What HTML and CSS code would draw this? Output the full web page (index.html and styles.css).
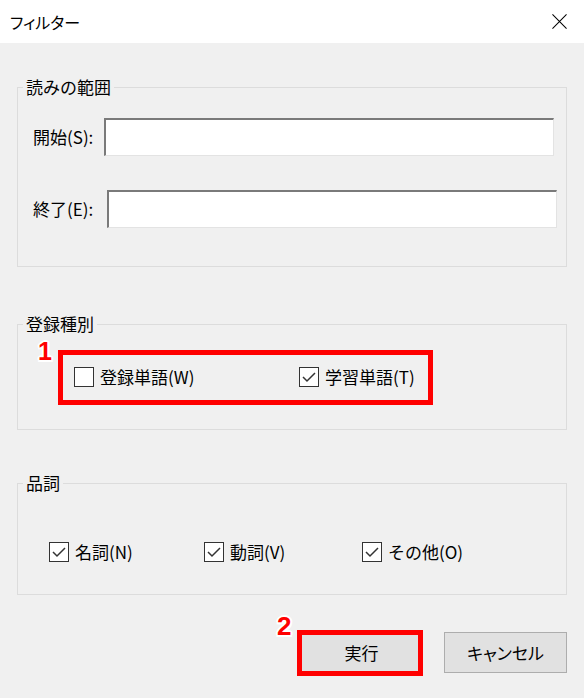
FILE: index.html
```html
<!DOCTYPE html>
<html lang="ja">
<head>
<meta charset="utf-8">
<title>フィルター</title>
<link rel="stylesheet" href="styles.css">
</head>
<body>
<div class="window">
  <header class="titlebar">
    <span class="title">フィルター</span>
    <svg class="close" width="16" height="16" viewBox="0 0 16 16" aria-hidden="true">
      <path d="M0.5 0.5 L15.5 15.5 M15.5 0.5 L0.5 15.5" stroke="#000" stroke-width="1.1" fill="none"/>
    </svg>
  </header>
  <main class="content">
    <fieldset class="group group-range">
      <legend class="legend">読みの範囲</legend>
      <div class="field">
        <label class="field-label">開始(S):</label>
        <input class="edit" type="text">
      </div>
      <div class="field field-end">
        <label class="field-label">終了(E):</label>
        <input class="edit" type="text">
      </div>
    </fieldset>

    <fieldset class="group group-kind">
      <legend class="legend">登録種別</legend>
      <div class="checks checks-kind">
        <label class="check check-w1"><span class="box"></span>登録単語(W)</label>
        <label class="check"><span class="box"><svg viewBox="0 0 18 18"><path d="M3 9 L7 13 L15 5" /></svg></span>学習単語(T)</label>
        <span class="callout callout-kind"></span>
        <span class="badge badge-kind">1</span>
      </div>
    </fieldset>

    <fieldset class="group group-pos">
      <legend class="legend">品詞</legend>
      <div class="checks checks-pos">
        <label class="check check-w2"><span class="box"><svg viewBox="0 0 18 18"><path d="M3 9 L7 13 L15 5" /></svg></span>名詞(N)</label>
        <label class="check check-w3"><span class="box"><svg viewBox="0 0 18 18"><path d="M3 9 L7 13 L15 5" /></svg></span>動詞(V)</label>
        <label class="check"><span class="box"><svg viewBox="0 0 18 18"><path d="M3 9 L7 13 L15 5" /></svg></span>その他(O)</label>
      </div>
    </fieldset>

    <div class="actions">
      <div class="btn-wrap">
        <button class="btn" type="button">実行</button>
        <span class="callout callout-run"></span>
        <span class="badge badge-run">2</span>
      </div>
      <button class="btn" type="button">キャンセル</button>
    </div>
  </main>
</div>
</body>
</html>
```
FILE: styles.css
```css
* { box-sizing: border-box; }

html, body {
  margin: 0;
  padding: 0;
}

body {
  width: 584px;
  height: 698px;
  background: #f0f0f0;
  font-family: "Noto Sans CJK JP", "Noto Sans", sans-serif;
  font-size: 17px;
  color: #000;
  overflow: hidden;
}

.titlebar {
  height: 43px;
  background: #fff;
  display: flex;
  align-items: center;
  justify-content: space-between;
  padding: 0 17px 0 10px;
}

.title {
  font-size: 16px;
  line-height: 20px;
  font-feature-settings: "palt";
}

.close {
  display: block;
  width: 15px;
  height: 15px;
}

.content {
  padding: 34px 17px 0;
}

.group {
  margin: 0;
  padding: 0;
  border: 1px solid #dcdcdc;
  min-inline-size: 0;
}

.legend {
  margin-left: 5px;
  padding: 0 3px;
  font-size: 17px;
  line-height: 20px;
}

.group-range {
  padding: 21px 0 38px;
}

.group-kind {
  margin-top: 47px;
  padding: 33px 0 42px;
}

.group-pos {
  margin-top: 43px;
  padding: 49px 0 32px;
}

.field {
  display: flex;
  align-items: center;
  padding-left: 15px;
}

.field-label {
  width: 71px;
  line-height: 20px;
}

.field-end {
  margin-top: 34px;
}

.field-end .field-label {
  width: 74px;
}

.edit {
  width: 450px;
  height: 38px;
  margin: 0;
  padding: 0 4px;
  background: #fff;
  border-style: solid;
  border-width: 2px 1px 1px 2px;
  border-color: #7a7a7a #e3e3e3 #e3e3e3 #7a7a7a;
  font: inherit;
  outline: none;
}

.checks {
  position: relative;
  display: flex;
  align-items: center;
  height: 20px;
}

.checks-kind {
  padding-left: 56px;
}

.checks-pos {
  padding-left: 31px;
}

.check {
  display: flex;
  align-items: center;
  gap: 6px;
  line-height: 20px;
}

.check-w1 { width: 225px; }
.check-w2 { width: 155px; }
.check-w3 { width: 158px; }

.box {
  width: 20px;
  height: 20px;
  border: 1px solid #333;
  background: #fff;
  display: block;
  flex: none;
}

.box svg {
  display: block;
  width: 18px;
  height: 18px;
}

.box path {
  fill: none;
  stroke: #333;
  stroke-width: 1.5;
}

.callout {
  position: absolute;
  border: 5px solid #ff0000;
  pointer-events: none;
}

.callout-kind {
  left: 40px;
  top: -17px;
  width: 375px;
  height: 55px;
}

.badge {
  position: absolute;
  font-family: "Liberation Sans", Arial, sans-serif;
  font-weight: bold;
  color: #ff0000;
  text-shadow:
    2px 0 #fff, -2px 0 #fff, 0 2px #fff, 0 -2px #fff,
    1.5px 1.5px #fff, -1.5px 1.5px #fff, 1.5px -1.5px #fff, -1.5px -1.5px #fff;
}

.badge-kind {
  left: 20px;
  top: -25px;
  font-size: 25px;
  line-height: 18px;
}

.actions {
  margin-top: 37px;
  display: flex;
  justify-content: flex-end;
  gap: 21px;
}

.btn-wrap {
  position: relative;
}

.btn {
  display: block;
  width: 123px;
  height: 41px;
  margin: 0;
  padding: 0;
  background: #e1e1e1;
  border: 1px solid #adadad;
  font-family: "Noto Sans CJK JP", "Noto Sans", sans-serif;
  font-size: 17px;
  color: #000;
  font-feature-settings: "palt";
}

.callout-run {
  left: -3px;
  top: -2px;
  width: 126px;
  height: 46px;
}

.badge-run {
  left: -23px;
  top: -15px;
  font-size: 26px;
  line-height: 19px;
}
```
